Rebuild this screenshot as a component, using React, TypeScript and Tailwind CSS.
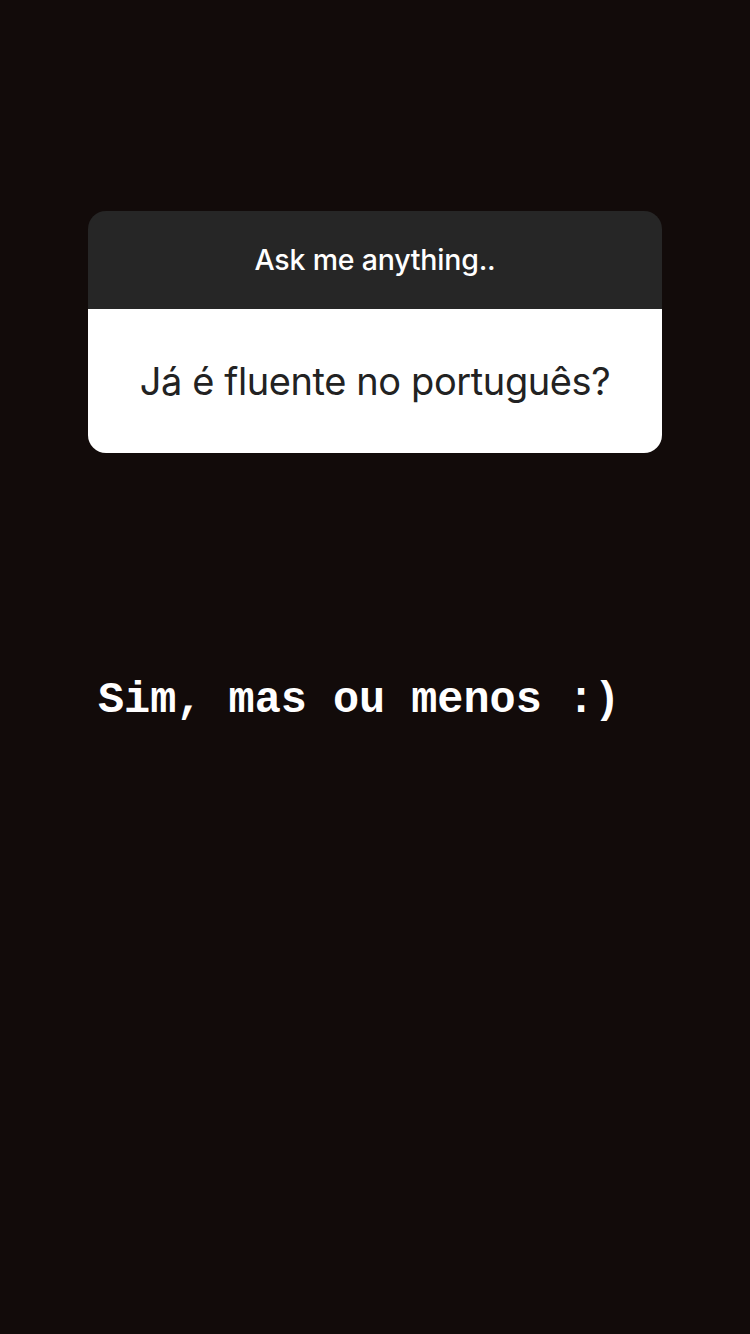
export default function App() {
  return (
    <div className="w-[750px] h-[1334px] bg-[#120b0a] flex flex-col items-center overflow-hidden">
      <div className="mt-[211px] w-[574px] rounded-[18px] overflow-hidden">
        <div className="h-[98px] bg-[#262626] flex items-center justify-center">
          <span className="text-white text-[28.5px] font-medium font-['Inter',sans-serif] tracking-[-0.2px]">Ask me anything..</span>
        </div>
        <div className="h-[144px] bg-white flex items-center justify-center">
          <span className="text-[#222] text-[38px] font-['Inter',sans-serif] tracking-[-0.4px]">Já é fluente no português?</span>
        </div>
      </div>
      <div className="mt-[226px] w-[750px] pl-[98px]">
        <span className="text-white text-[43.5px] font-bold font-['Liberation_Mono',monospace] leading-none whitespace-pre">Sim, mas ou menos :)</span>
      </div>
    </div>
  )
}
